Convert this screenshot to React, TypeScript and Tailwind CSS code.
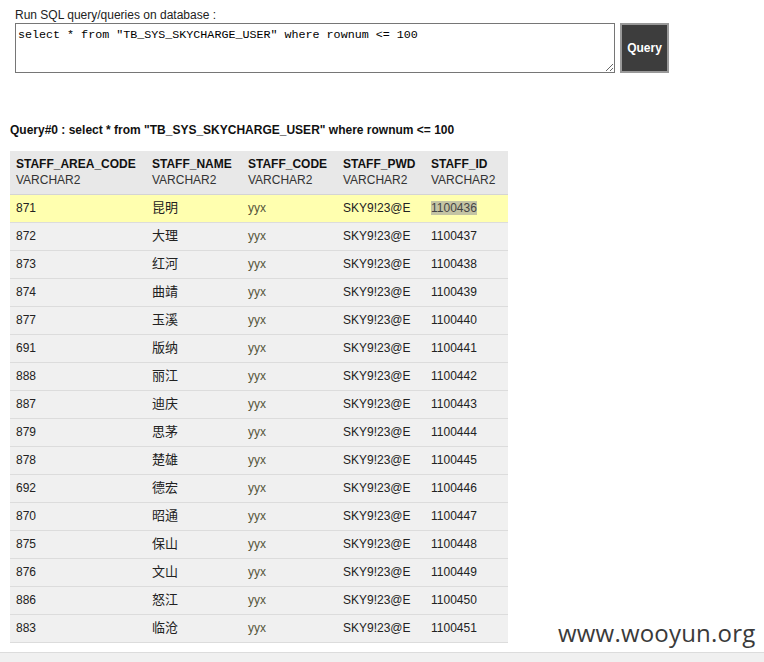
const rows: [string, string, string][] = [
  ['871', '昆明', '1100436'],
  ['872', '大理', '1100437'],
  ['873', '红河', '1100438'],
  ['874', '曲靖', '1100439'],
  ['877', '玉溪', '1100440'],
  ['691', '版纳', '1100441'],
  ['888', '丽江', '1100442'],
  ['887', '迪庆', '1100443'],
  ['879', '思茅', '1100444'],
  ['878', '楚雄', '1100445'],
  ['692', '德宏', '1100446'],
  ['870', '昭通', '1100447'],
  ['875', '保山', '1100448'],
  ['876', '文山', '1100449'],
  ['886', '怒江', '1100450'],
  ['883', '临沧', '1100451'],
];

const cols = ['STAFF_AREA_CODE', 'STAFF_NAME', 'STAFF_CODE', 'STAFF_PWD', 'STAFF_ID'];
const widths = ['w-[136px]', 'w-[96px]', 'w-[95px]', 'w-[88px]', 'w-[83px]'];

export default function App() {
  return (
    <div className="relative min-h-screen bg-white text-[12px] text-[#222] font-['Liberation_Sans','Noto_Sans_CJK_SC',sans-serif]">
      {/* Query form */}
      <div className="pl-[15px] pt-[8px]">
        <div className="leading-[15px]">Run SQL query/queries on database :</div>
        <div className="flex items-start gap-[5px]">
          <textarea
            className="w-[600px] h-[50px] border border-[#767676] px-[2px] pt-[4px] pb-[2px] text-[11.7px] leading-[14px] text-black resize-y font-['Liberation_Mono',monospace] outline-none"
            defaultValue={'select * from "TB_SYS_SKYCHARGE_USER" where rownum <= 100'}
          />
          <button className="w-[49px] h-[50px] bg-[#3d3d3d] border-2 border-[#999] text-white font-bold text-[12px]">
            Query
          </button>
        </div>
      </div>

      {/* Result */}
      <div className="pl-[10px] pt-[50px]">
        <div className="font-bold leading-[15px] text-[#111]">
          Query#0 : select * from "TB_SYS_SKYCHARGE_USER" where rownum &lt;= 100
        </div>
        <table className="mt-[13px] border-collapse w-[498px] table-fixed">
          <thead>
            <tr className="bg-[#e8e8e8] border-b border-[#d4d4d4] h-[43px]">
              {cols.map((c, i) => (
                <th key={c} className={`${widths[i]} text-left font-normal px-[6px] align-middle leading-[16px]`}>
                  <div className="font-bold text-[#111]">{c}</div>
                  <div className="text-[#333]">VARCHAR2</div>
                </th>
              ))}
            </tr>
          </thead>
          <tbody>
            {rows.map(([code, name, id], i) => (
              <tr
                key={code + id}
                className={`h-[28px] border-b border-[#dcdcdc] ${i === 0 ? 'bg-[#ffffaf]' : 'bg-[#f0f0f0]'}`}
              >
                <td className="px-[6px]">{code}</td>
                <td className="px-[6px] text-[13px]">{name}</td>
                <td className="px-[6px] text-[#55553a]">yyx</td>
                <td className="px-[6px]">SKY9!23@E</td>
                <td className="px-[6px]">
                  {i === 0 ? <span className="bg-[#c4c4a4] text-[#444]">{id}</span> : id}
                </td>
              </tr>
            ))}
          </tbody>
        </table>
      </div>

      <div className="mt-[9px] h-[10px] bg-[#f0f0f0] border-t border-[#dcdcdc]" />

      {/* watermark */}
      <div className="absolute left-[558px] top-[615px] text-[24px] text-[#3a3a3a] font-['Open_Sans',sans-serif] tracking-[0.2px]">
        www.wooyun.org
      </div>
    </div>
  );
}
